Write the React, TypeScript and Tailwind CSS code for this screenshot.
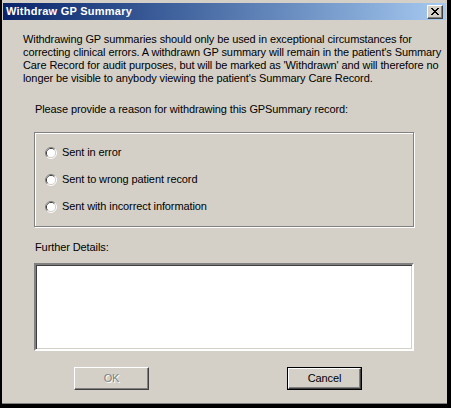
import React, { useState } from 'react';

const reasons = ['Sent in error', 'Sent to wrong patient record', 'Sent with incorrect information'];

function CloseGlyph() {
  // classic 8x7 pixel cross
  const rows = ['XX....XX', '.XX..XX.', '..XXXX..', '...XX...', '..XXXX..', '.XX..XX.', 'XX....XX'];
  return (
    <svg width="8" height="7" viewBox="0 0 8 7" shapeRendering="crispEdges">
      {rows.map((row, y) =>
        row.split('').map((c, x) => (c === 'X' ? <rect key={`${x}-${y}`} x={x} y={y} width="1" height="1" fill="#000" /> : null))
      )}
    </svg>
  );
}

function Radio({ checked }: { checked: boolean }) {
  return (
    <svg width="12" height="12" viewBox="0 0 12 12" className="shrink-0">
      <path d="M2.11 9.89 A5.5 5.5 0 0 1 9.89 2.11" fill="none" stroke="#808080" strokeWidth="1" />
      <path d="M9.89 2.11 A5.5 5.5 0 0 1 2.11 9.89" fill="none" stroke="#ffffff" strokeWidth="1" />
      <path d="M2.82 9.18 A4.5 4.5 0 0 1 9.18 2.82" fill="none" stroke="#404040" strokeWidth="1" />
      <path d="M9.18 2.82 A4.5 4.5 0 0 1 2.82 9.18" fill="none" stroke="#d4d0c8" strokeWidth="1" />
      <circle cx="6" cy="6" r="4" fill="#ffffff" />
      {checked && <circle cx="6" cy="6" r="2" fill="#000" />}
    </svg>
  );
}

export default function App() {
  const [reason, setReason] = useState<number | null>(null);
  const [details, setDetails] = useState('');

  return (
    <div
      className="w-[451px] h-[408px] bg-black flex text-[11px] tracking-[-0.1px] text-black"
      style={{ fontFamily: '"Liberation Sans", Arial, sans-serif' }}
    >
      <div className="ml-[2px] w-[445px] h-[404px] bg-[#d4d0c8] pt-[3px] pl-[1px] pr-[1px] border-b border-[#808080] flex flex-col">
        {/* Title bar */}
        <div className="h-[17px] flex items-center justify-between bg-gradient-to-r from-[#0a246a] to-[#a6caf0] pl-[3px] pr-[3px]">
          <span className="text-white font-bold text-[11px] tracking-[0.25px] leading-none">Withdraw GP Summary</span>
          <button className="w-[16px] h-[14px] bg-[#d4d0c8] flex items-center justify-center border-t border-l border-t-white border-l-white border-r border-b border-r-[#404040] border-b-[#404040] shadow-[inset_-1px_-1px_0_#808080]">
            <CloseGlyph />
          </button>
        </div>

        {/* Content */}
        <div className="flex flex-col whitespace-nowrap">
          <p className="mt-[13px] pl-[20px] leading-[13px]">
            <span className="block">Withdrawing GP summaries should only be used in exceptional circumstances for</span>
            <span className="block">correcting clinical errors. A withdrawn GP summary will remain in the patient's Summary</span>
            <span className="block">Care Record for audit purposes, but will be marked as 'Withdrawn' and will therefore no</span>
            <span className="block">longer be visible to anybody viewing the patient's Summary Care Record.</span>
          </p>

          <p className="mt-[18px] ml-[32px] leading-[13px]">
            Please provide a reason for withdrawing this GPSummary record:
          </p>

          <div className="mt-[16px] ml-[31px] w-[380px] border border-[#808080] shadow-[inset_1px_1px_0_#fff,1px_1px_0_#fff] pt-[6px] pb-[6px] pl-[10px]">
            {reasons.map((r, i) => (
              <label key={r} className="h-[27px] flex items-center gap-[5px] cursor-default" onClick={() => setReason(i)}>
                <Radio checked={reason === i} />
                <span className="leading-[13px]">{r}</span>
              </label>
            ))}
          </div>

          <p className="mt-[14px] ml-[32px] leading-[13px]">Further Details:</p>

          <textarea
            value={details}
            onChange={e => setDetails(e.target.value)}
            className="mt-[9px] ml-[31px] w-[380px] h-[88px] bg-white resize-none outline-none border-2 border-t-[#808080] border-l-[#808080] border-r-white border-b-white shadow-[inset_1px_1px_0_#404040,inset_-1px_-1px_0_#d4d0c8] p-[2px] text-[11px]"
          />

          <div className="mt-[16px] ml-[71px] flex gap-[138px]">
            <button
              disabled
              className="w-[75px] h-[23px] bg-[#d4d0c8] border border-t-white border-l-white border-r-[#404040] border-b-[#404040] shadow-[inset_-1px_-1px_0_#808080] text-[#808080] [text-shadow:1px_1px_0_#fff] leading-none"
            >
              OK
            </button>
            <button className="w-[75px] h-[23px] bg-black p-[1px] flex">
              <span className="flex-1 flex items-center justify-center bg-[#d4d0c8] border border-t-white border-l-white border-r-[#404040] border-b-[#404040] shadow-[inset_-1px_-1px_0_#808080] leading-none">
                Cancel
              </span>
            </button>
          </div>
        </div>
      </div>
    </div>
  );
}
